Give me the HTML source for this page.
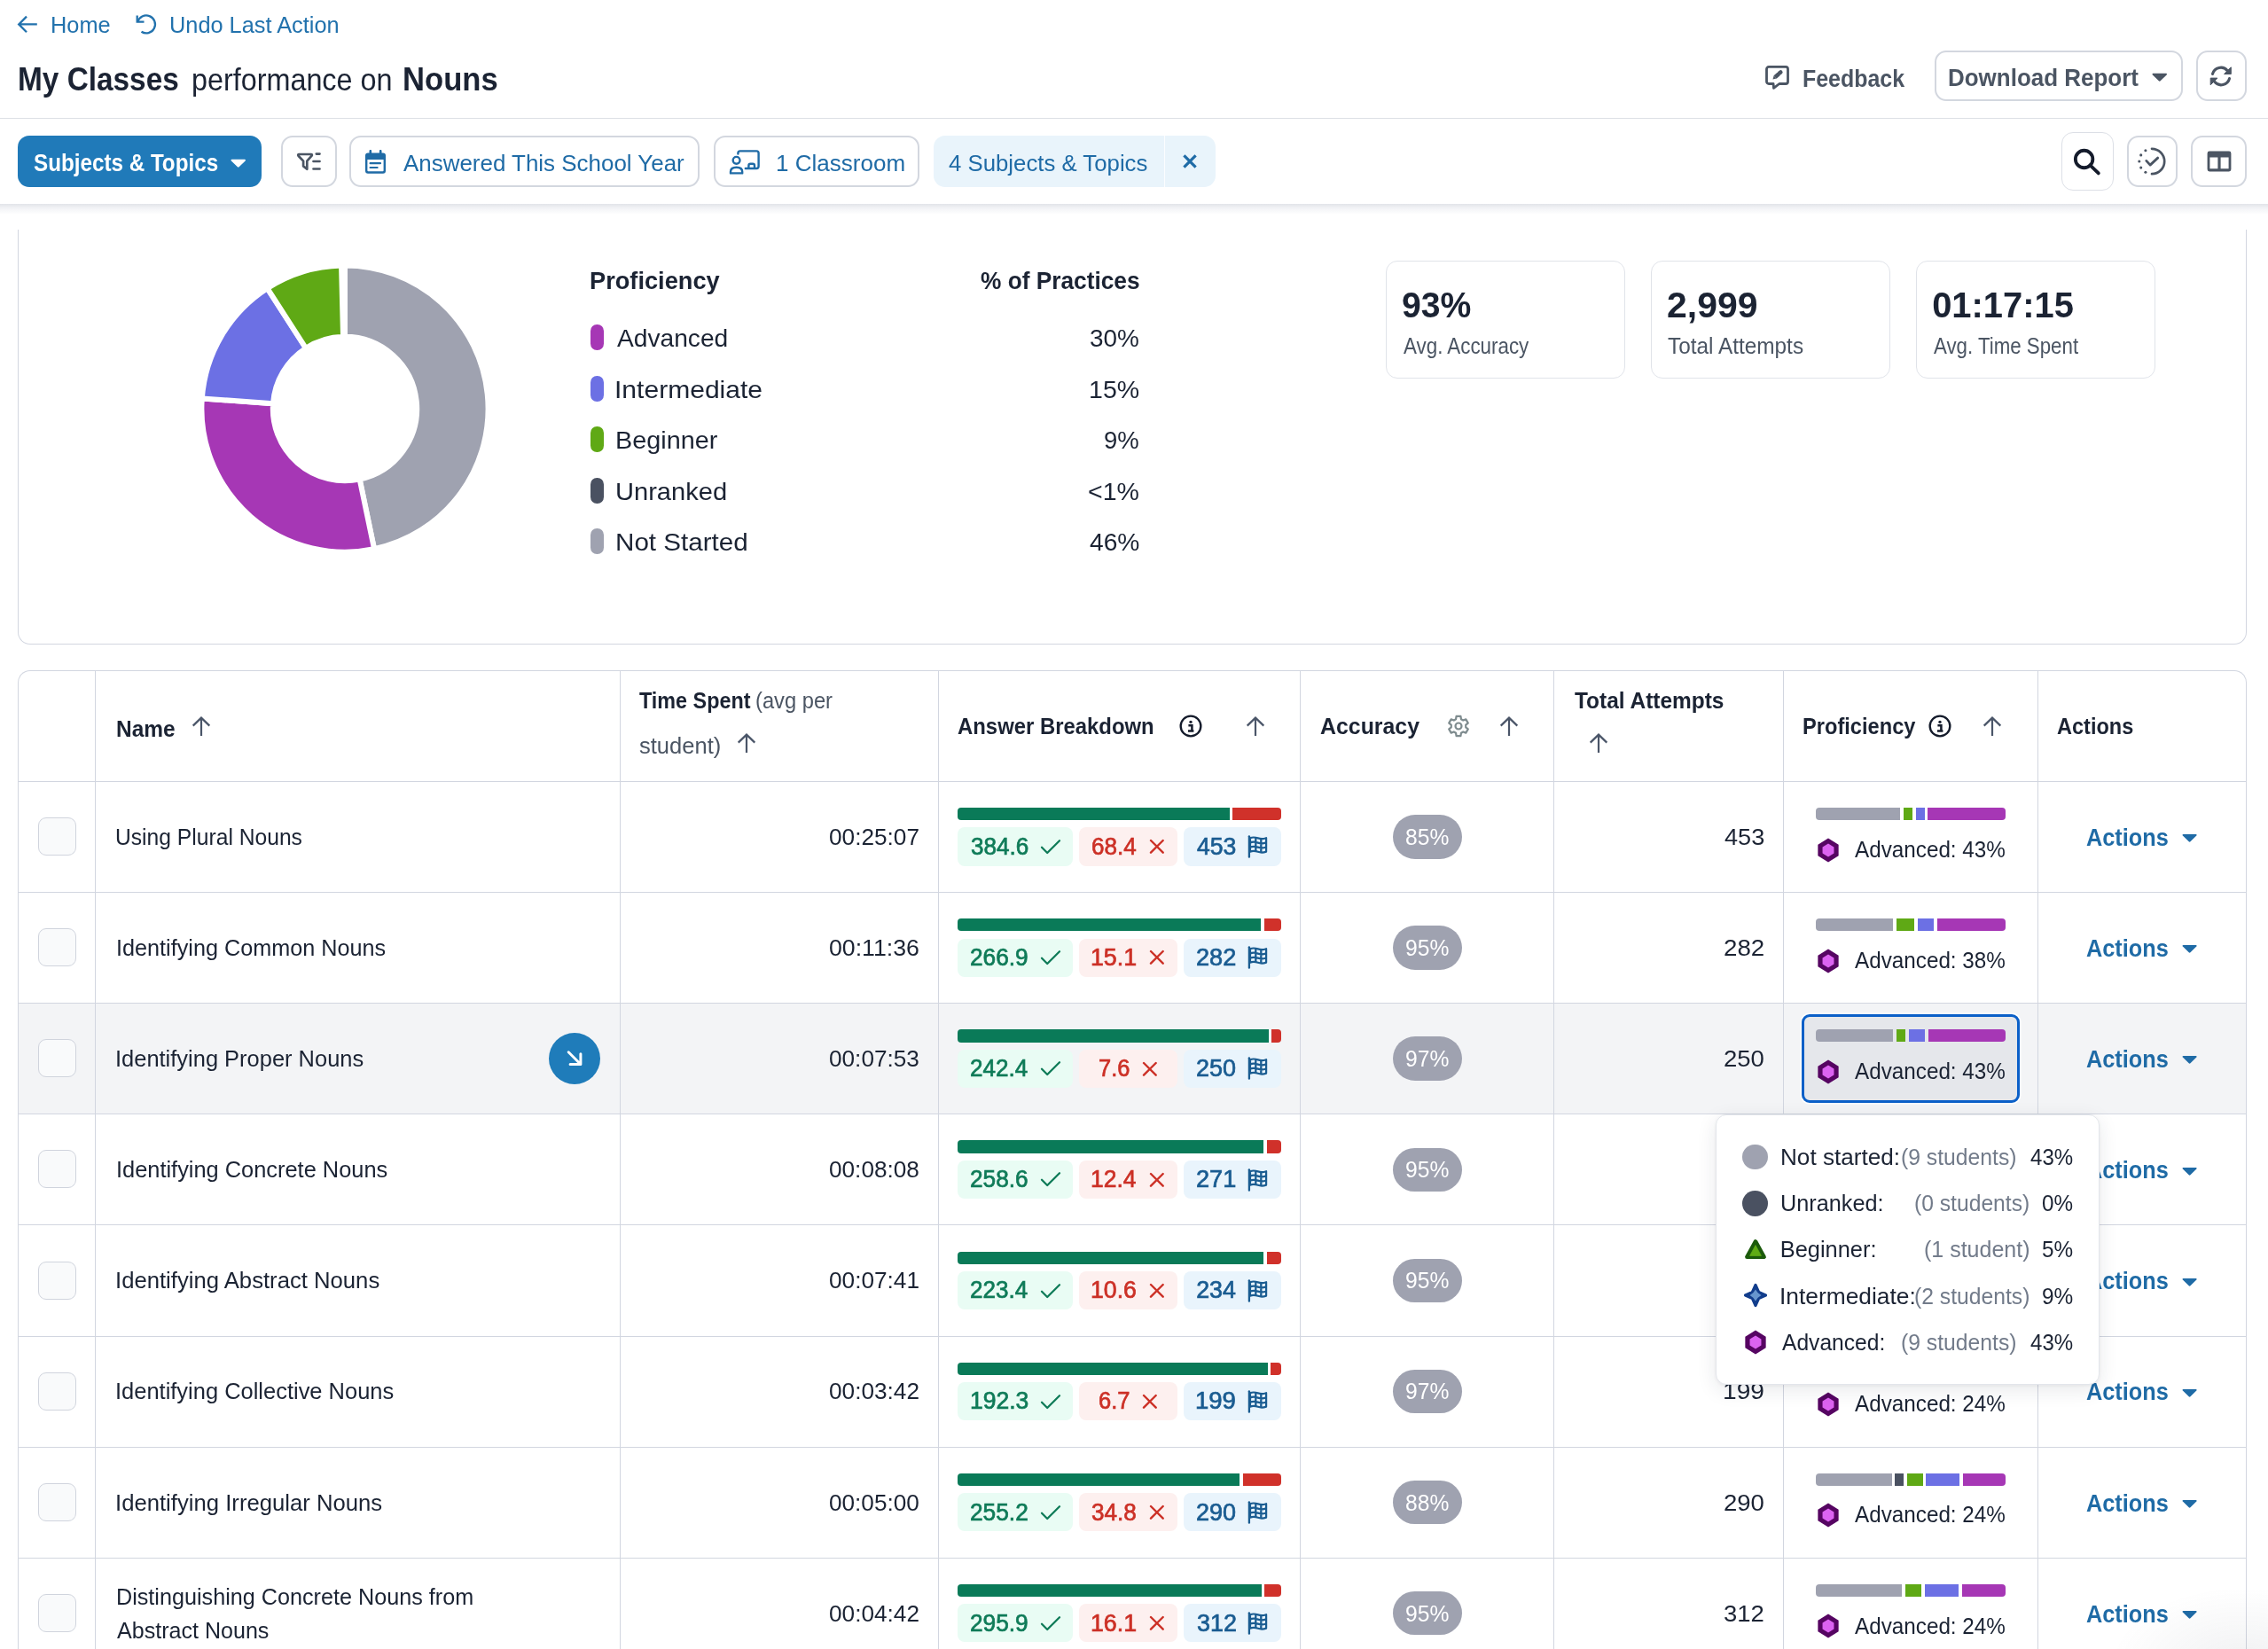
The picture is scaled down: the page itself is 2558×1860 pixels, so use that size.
<!DOCTYPE html>
<html lang="en"><head><meta charset="utf-8"><title>My Classes performance on Nouns</title>
<style>
html,body{margin:0;padding:0;background:#fff;}
body{width:2558px;height:1860px;position:relative;overflow:hidden;font-family:"Liberation Sans",sans-serif;color:#1b2333;}
.b{position:absolute;box-sizing:border-box;display:block;}
.t{position:absolute;white-space:nowrap;line-height:1;display:block;}
#w{position:absolute;left:0;top:0;width:2558px;height:1860px;overflow:hidden;will-change:transform;}
.btn{border:2px solid #d3d7df;border-radius:13px;background:#fff;}
.hl{background:#d5d9e2;}
</style></head><body><div id="w">

<svg class="b" style="left:19.0px;top:16.0px;" width="25.0" height="24.0" viewBox="0 0 25 24"><path d="M22.800 11.400H2.800M11 2.600L2.200 11.400l8.800 8.800" fill="none" stroke="#2272ad" stroke-width="2.300" stroke-linecap="butt" stroke-linejoin="miter"/></svg>
<span class="t " style="left:57.0px;top:15.9px;font-size:25px;color:#2272ad;transform:scaleX(1.0138);transform-origin:0 50%;">Home</span>
<svg class="b" style="left:153.0px;top:15.0px;" width="25.0" height="25.0" viewBox="0 0 25 25"><path d="M1.700 2.400v7.300h7.800" fill="none" stroke="#2272ad" stroke-width="2.300" stroke-linecap="butt" stroke-linejoin="miter"/><path d="M2.300 9.850A10 10 0 1 1 6.500 20.800" fill="none" stroke="#2272ad" stroke-width="2.300" stroke-linecap="butt"/></svg>
<span class="t " style="left:191.0px;top:15.9px;font-size:25px;color:#2272ad;transform:scaleX(1.0135);transform-origin:0 50%;">Undo Last Action</span>
<span class="t " style="left:19.8px;top:72.4px;font-size:36.3px;color:#1b2333;font-weight:700;transform:scaleX(0.9194);transform-origin:0 50%;">My Classes</span>
<span class="t " style="left:215.5px;top:73.0px;font-size:35.6px;color:#1b2333;transform:scaleX(0.9088);transform-origin:0 50%;">performance on</span>
<span class="t " style="left:453.8px;top:72.4px;font-size:36.3px;color:#1b2333;font-weight:700;transform:scaleX(0.9534);transform-origin:0 50%;">Nouns</span>
<svg class="b" style="left:1990.0px;top:72.0px;" width="30.0" height="30.0" viewBox="0 0 30 30"><path d="M5 3.400H24a2.500 2.500 0 0 1 2.500 2.500V20a2.500 2.500 0 0 1-2.500 2.500H16.800L10.500 27.300L10.100 22.500H5A2.500 2.500 0 0 1 2.500 20V5.900A2.500 2.500 0 0 1 5 3.400z" fill="none" stroke="#4b5563" stroke-width="2.800" stroke-linejoin="round"/><path d="M12.100 14.900L16.100 11.400" stroke="#4b5563" stroke-width="4.600" stroke-linecap="butt"/><path d="M17 10.600L18.300 9.500" stroke="#4b5563" stroke-width="4.600" stroke-linecap="round"/><path d="M9.500 17.500L10.650 13.240L13.550 16.560z" fill="#4b5563"/></svg>
<span class="t " style="left:2032.5px;top:74.9px;font-size:28px;color:#4b5563;font-weight:700;transform:scaleX(0.8909);transform-origin:0 50%;">Feedback</span>
<div class="b btn" style="left:2181.5px;top:57.0px;width:280.0px;height:56.5px;"></div>
<span class="t " style="left:2197.3px;top:73.1px;font-size:28.5px;color:#4b5563;font-weight:700;transform:scaleX(0.9111);transform-origin:0 50%;">Download Report</span>
<svg class="b" style="left:2426.8px;top:82.0px;" width="17.5" height="10.0" viewBox="0 0 18 10"><path d="M1.6 0.6h14.8c1 0 1.4 1.1 0.7 1.8l-7.2 7c-0.5 0.5-1.3 0.5-1.8 0l-7.2-7C0.2 1.7 0.6 0.6 1.6 0.6z" fill="#4b5563"/></svg>
<div class="b btn" style="left:2476.5px;top:57.0px;width:57.5px;height:56.5px;"></div>
<svg class="b" style="left:2489.9px;top:70.7px;" width="30.0" height="30.0" viewBox="-15 -15 30 30"><path d="M-9.500-2.600A9.600 9.600 0 0 1 7.200-6.300M9.500 2.600A9.600 9.600 0 0 1-7.200 6.300" fill="none" stroke="#4b5563" stroke-width="3.100" stroke-linecap="round"/><path d="M11.300-10.200V-2.500H3.600zM-11.800 9.800V2.100H-4.100z" fill="#4b5563" stroke="#4b5563" stroke-width="1" stroke-linejoin="round"/></svg>
<div class="b" style="left:0.0px;top:133.0px;width:2558.0px;height:1.0px;background:#dde0e6;"></div>
<div class="b" style="left:0.0px;top:230.0px;width:2558.0px;height:12.0px;background:linear-gradient(#e2e4e9,#f2f3f6 40%,#ffffff);"></div>
<div class="b" style="left:20.0px;top:153.0px;width:275.0px;height:58.0px;background:#207ab9;border-radius:13px;"></div>
<span class="t " style="left:37.9px;top:169.7px;font-size:27.6px;color:#ffffff;font-weight:700;transform:scaleX(0.8776);transform-origin:0 50%;">Subjects &amp; Topics</span>
<svg class="b" style="left:260.0px;top:179.4px;" width="17.5" height="10.0" viewBox="0 0 18 10"><path d="M1.6 0.6h14.8c1 0 1.4 1.1 0.7 1.8l-7.2 7c-0.5 0.5-1.3 0.5-1.8 0l-7.2-7C0.2 1.7 0.6 0.6 1.6 0.6z" fill="#ffffff"/></svg>
<div class="b btn" style="left:317.3px;top:153.2px;width:62.5px;height:57.6px;"></div>
<svg class="b" style="left:334.0px;top:169.9px;" width="30.0" height="24.0" viewBox="0 0 30 24"><path d="M3.200 4h13.700c.900 0 1.300 1 .700 1.700L12.300 11.600V20.800L8.100 17.400V11.600L2.500 5.700C1.900 5 2.300 4 3.200 4z" fill="none" stroke="#4b5563" stroke-width="2.700" stroke-linejoin="round"/><path d="M22.800 3.600h3.700M19.500 12h7M19.500 20.500h7" stroke="#4b5563" stroke-width="2.700" stroke-linecap="round"/></svg>
<div class="b btn" style="left:394.3px;top:153.2px;width:395.2px;height:57.6px;"></div>
<svg class="b" style="left:411.0px;top:168.5px;" width="25.0" height="28.0" viewBox="0 0 25 28"><path d="M6.8 1.2v4M18.2 1.2v4" stroke="#1f6ba6" stroke-width="2.6" stroke-linecap="round"/><path d="M4 3.6h17a3 3 0 0 1 3 3v17.2a3 3 0 0 1-3 3H4a3 3 0 0 1-3-3V6.600a3 3 0 0 1 3-3zM3.4 11v12.200a1 1 0 0 0 1 1h16.200a1 1 0 0 0 1-1V11z" fill="#1f6ba6" fill-rule="evenodd"/><path d="M6.600 15.200h11.400M6.600 20h8" stroke="#1f6ba6" stroke-width="2.2" stroke-linecap="round"/></svg>
<span class="t " style="left:454.5px;top:170.6px;font-size:26.6px;color:#1f6ba6;transform:scaleX(0.9754);transform-origin:0 50%;">Answered This School Year</span>
<div class="b btn" style="left:804.6px;top:153.2px;width:232.6px;height:57.6px;"></div>
<svg class="b" style="left:821.5px;top:168.5px;" width="36.0" height="29.0" viewBox="0 0 36 29"><circle cx="8.6" cy="11.8" r="3.9" fill="none" stroke="#1f6ba6" stroke-width="2.4"/><path d="M2 26.400v-1.600c0-3.200 2.600-5 6.600-5s6.600 1.800 6.600 5v1.600z" fill="none" stroke="#1f6ba6" stroke-width="2.4" stroke-linejoin="round"/><path d="M10.400 4.600v-.8a2.400 2.400 0 0 1 2.400-2.400h18.400a2.400 2.400 0 0 1 2.400 2.400v14.800a2.400 2.400 0 0 1-2.400 2.400H18.800" fill="none" stroke="#1f6ba6" stroke-width="2.4" stroke-linecap="round"/><path d="M22.400 20.600v-2.800a2 2 0 0 1 2-2h2.600a2 2 0 0 1 2 2v2.800" fill="none" stroke="#1f6ba6" stroke-width="2.4"/></svg>
<span class="t " style="left:874.8px;top:170.6px;font-size:26.6px;color:#1f6ba6;transform:scaleX(0.9789);transform-origin:0 50%;">1 Classroom</span>
<div class="b" style="left:1053.0px;top:153.2px;width:318.0px;height:57.6px;background:#e9f4fb;border-radius:13px;"></div>
<div class="b" style="left:1313.0px;top:153.2px;width:1.0px;height:57.6px;background:#fbfdff;"></div>
<span class="t " style="left:1070.4px;top:170.6px;font-size:26.6px;color:#1f6ba6;transform:scaleX(0.9689);transform-origin:0 50%;">4 Subjects &amp; Topics</span>
<svg class="b" style="left:1332.4px;top:171.5px;" width="20.0" height="20.0" viewBox="0 0 20 20"><path d="M3.400 3.400l13.200 13.200M16.600 3.400L3.400 16.600" stroke="#1f6ba6" stroke-width="3.200" stroke-linecap="butt"/></svg>
<div class="b" style="left:2325.0px;top:149.0px;width:59.0px;height:66.0px;border:1px solid #dcdfe6;border-radius:13px;background:#fff;"></div>
<svg class="b" style="left:2336.0px;top:165.0px;" width="34.0" height="34.0" viewBox="0 0 34 34"><circle cx="14.600" cy="14.500" r="9.750" fill="none" stroke="#141b2b" stroke-width="3.800"/><path d="M21.400 21.300l9.400 9.100" stroke="#141b2b" stroke-width="3.800" stroke-linecap="round"/></svg>
<div class="b btn" style="left:2399.0px;top:153.2px;width:56.5px;height:57.6px;"></div>
<svg class="b" style="left:2409.8px;top:164.8px;" width="34.0" height="34.0" viewBox="-17 -17 34 34"><path d="M0-14.200a14.200 14.200 0 0 1 0 28.400" fill="none" stroke="#4b5563" stroke-width="2.700" stroke-linecap="round"/><circle cx="-7.10" cy="-12.30" r="1.550" fill="#4b5563"/><circle cx="-12.30" cy="-7.10" r="1.550" fill="#4b5563"/><circle cx="-14.20" cy="-0.00" r="1.550" fill="#4b5563"/><circle cx="-12.30" cy="7.10" r="1.550" fill="#4b5563"/><circle cx="-7.10" cy="12.30" r="1.550" fill="#4b5563"/><path d="M-6.200-.600l4.300 4.700 8.600-8" fill="none" stroke="#4b5563" stroke-width="2.800" stroke-linecap="round" stroke-linejoin="round"/></svg>
<div class="b btn" style="left:2471.0px;top:153.2px;width:62.7px;height:57.6px;"></div>
<svg class="b" style="left:2488.5px;top:170.0px;" width="28.0" height="24.0" viewBox="0 0 28 24"><path d="M3 0.600h22a2.400 2.400 0 0 1 2.400 2.400v18a2.400 2.400 0 0 1-2.400 2.400H3a2.400 2.400 0 0 1-2.400-2.400V3A2.400 2.400 0 0 1 3 .600zM3.400 7.400v12.800h9V7.400zM15.600 7.400v12.800h9V7.400z" fill="#4b5563" fill-rule="evenodd"/></svg>
<div class="b" style="left:20.0px;top:259.0px;width:2514.0px;height:468.0px;border:1px solid #d2d6e0;border-top:none;border-radius:0 0 14px 14px;"></div>
<svg class="b" style="left:0;top:0" width="700" height="740" viewBox="0 0 700 740"><path d="M389.00 299.40A161.6 161.6 0 0 1 422.05 619.18L405.61 540.48A81.2 81.2 0 0 0 389.00 379.80Z" fill="#9fa2b0" stroke="#ffffff" stroke-width="6" stroke-linejoin="miter"/><path d="M422.05 619.18A161.6 161.6 0 0 1 227.81 449.45L308.01 455.19A81.2 81.2 0 0 0 405.61 540.48Z" fill="#a637b5" stroke="#ffffff" stroke-width="6" stroke-linejoin="miter"/><path d="M227.81 449.45A161.6 161.6 0 0 1 301.46 325.16L345.01 392.75A81.2 81.2 0 0 0 308.01 455.19Z" fill="#6c70e4" stroke="#ffffff" stroke-width="6" stroke-linejoin="miter"/><path d="M301.46 325.16A161.6 161.6 0 0 1 385.05 299.45L387.02 379.82A81.2 81.2 0 0 0 345.01 392.75Z" fill="#5fa915" stroke="#ffffff" stroke-width="6" stroke-linejoin="miter"/></svg>
<span class="t " style="left:665.2px;top:302.3px;font-size:28.5px;color:#1b2333;font-weight:700;transform:scaleX(0.9544);transform-origin:0 50%;">Proficiency</span>
<span class="t " style="left:1105.5px;top:302.3px;font-size:28.5px;color:#1b2333;font-weight:700;transform:scaleX(0.9215);transform-origin:0 50%;">% of Practices</span>
<div class="b" style="left:666.2px;top:366.0px;width:14.5px;height:29.0px;background:#a637b5;border-radius:7.250px;"></div>
<span class="t " style="left:696.1px;top:367.2px;font-size:28.5px;color:#1b2333;transform:scaleX(0.9880);transform-origin:0 50%;">Advanced</span>
<span class="t " style="left:1229.2px;top:367.2px;font-size:28.5px;color:#1b2333;transform:scaleX(0.9781);transform-origin:0 50%;">30%</span>
<div class="b" style="left:666.2px;top:423.5px;width:14.5px;height:29.0px;background:#6c70e4;border-radius:7.250px;"></div>
<span class="t " style="left:693.4px;top:424.7px;font-size:28.5px;color:#1b2333;transform:scaleX(1.0547);transform-origin:0 50%;">Intermediate</span>
<span class="t " style="left:1228.1px;top:424.7px;font-size:28.5px;color:#1b2333;">15%</span>
<div class="b" style="left:666.2px;top:481.0px;width:14.5px;height:29.0px;background:#5fa915;border-radius:7.250px;"></div>
<span class="t " style="left:693.9px;top:482.2px;font-size:28.5px;color:#1b2333;transform:scaleX(1.0111);transform-origin:0 50%;">Beginner</span>
<span class="t " style="left:1245.3px;top:482.2px;font-size:28.5px;color:#1b2333;transform:scaleX(0.9639);transform-origin:0 50%;">9%</span>
<div class="b" style="left:666.2px;top:538.5px;width:14.5px;height:29.0px;background:#4a5161;border-radius:7.250px;"></div>
<span class="t " style="left:693.9px;top:539.7px;font-size:28.5px;color:#1b2333;transform:scaleX(1.0204);transform-origin:0 50%;">Unranked</span>
<span class="t " style="left:1227.0px;top:539.7px;font-size:28.5px;color:#1b2333;">&lt;1%</span>
<div class="b" style="left:666.2px;top:596.0px;width:14.5px;height:29.0px;background:#9fa2b0;border-radius:7.250px;"></div>
<span class="t " style="left:693.8px;top:597.2px;font-size:28.5px;color:#1b2333;transform:scaleX(1.0387);transform-origin:0 50%;">Not Started</span>
<span class="t " style="left:1228.6px;top:597.2px;font-size:28.5px;color:#1b2333;transform:scaleX(0.9886);transform-origin:0 50%;">46%</span>
<div class="b" style="left:1563.4px;top:294.0px;width:270.0px;height:132.5px;border:1px solid #e0e3e9;border-radius:13px;background:#fff;"></div>
<span class="t " style="left:1581.4px;top:324.5px;font-size:39.9px;color:#1b2333;font-weight:700;transform:scaleX(0.9818);transform-origin:0 50%;">93%</span>
<span class="t " style="left:1582.7px;top:376.7px;font-size:26.6px;color:#4b5563;transform:scaleX(0.8409);transform-origin:0 50%;">Avg. Accuracy</span>
<div class="b" style="left:1862.0px;top:294.0px;width:270.0px;height:132.5px;border:1px solid #e0e3e9;border-radius:13px;background:#fff;"></div>
<span class="t " style="left:1880.0px;top:324.5px;font-size:39.9px;color:#1b2333;font-weight:700;transform:scaleX(1.0262);transform-origin:0 50%;">2,999</span>
<span class="t " style="left:1880.9px;top:376.7px;font-size:26.6px;color:#4b5563;transform:scaleX(0.9165);transform-origin:0 50%;">Total Attempts</span>
<div class="b" style="left:2161.3px;top:294.0px;width:270.0px;height:132.5px;border:1px solid #e0e3e9;border-radius:13px;background:#fff;"></div>
<span class="t " style="left:2179.2px;top:324.5px;font-size:39.9px;color:#1b2333;font-weight:700;">01:17:15</span>
<span class="t " style="left:2180.6px;top:376.7px;font-size:26.6px;color:#4b5563;transform:scaleX(0.8380);transform-origin:0 50%;">Avg. Time Spent</span>
<div class="b" style="left:20.0px;top:1131.6px;width:2514.0px;height:125.1px;background:#f3f4f6;"></div>
<div class="b" style="left:20.0px;top:756.0px;width:2514.0px;height:1200.0px;border:1px solid #d2d6e0;border-radius:14px 14px 0 0;border-bottom:none;"></div>
<div class="b" style="left:107.0px;top:756.0px;width:1.0px;height:1110.0px;background:#d2d6e0;"></div>
<div class="b" style="left:699.0px;top:756.0px;width:1.0px;height:1110.0px;background:#d2d6e0;"></div>
<div class="b" style="left:1058.0px;top:756.0px;width:1.0px;height:1110.0px;background:#d2d6e0;"></div>
<div class="b" style="left:1466.0px;top:756.0px;width:1.0px;height:1110.0px;background:#d2d6e0;"></div>
<div class="b" style="left:1752.0px;top:756.0px;width:1.0px;height:1110.0px;background:#d2d6e0;"></div>
<div class="b" style="left:2011.0px;top:756.0px;width:1.0px;height:1110.0px;background:#d2d6e0;"></div>
<div class="b" style="left:2298.0px;top:756.0px;width:1.0px;height:1110.0px;background:#d2d6e0;"></div>
<div class="b" style="left:20.0px;top:881.0px;width:2514.0px;height:1.0px;background:#d2d6e0;"></div>
<div class="b" style="left:20.0px;top:1006.0px;width:2514.0px;height:1.0px;background:#d2d6e0;"></div>
<div class="b" style="left:20.0px;top:1131.0px;width:2514.0px;height:1.0px;background:#d2d6e0;"></div>
<div class="b" style="left:20.0px;top:1256.0px;width:2514.0px;height:1.0px;background:#d2d6e0;"></div>
<div class="b" style="left:20.0px;top:1381.0px;width:2514.0px;height:1.0px;background:#d2d6e0;"></div>
<div class="b" style="left:20.0px;top:1507.0px;width:2514.0px;height:1.0px;background:#d2d6e0;"></div>
<div class="b" style="left:20.0px;top:1632.0px;width:2514.0px;height:1.0px;background:#d2d6e0;"></div>
<div class="b" style="left:20.0px;top:1757.0px;width:2514.0px;height:1.0px;background:#d2d6e0;"></div>
<span class="t " style="left:131.2px;top:809.9px;font-size:25.3px;color:#1b2333;font-weight:700;transform:scaleX(0.9682);transform-origin:0 50%;">Name</span>
<svg class="b" style="left:215.5px;top:806.7px;" width="22.0" height="24.0" viewBox="0 0 22 24"><path d="M11 23V3.200M1.700 11.600L11 2.600l9.300 9" fill="none" stroke="#4a5568" stroke-width="2.200" stroke-linecap="butt" stroke-linejoin="miter"/></svg>
<span class="t " style="left:720.8px;top:777.9px;font-size:25.3px;color:#1b2333;font-weight:700;transform:scaleX(0.9238);transform-origin:0 50%;">Time Spent</span>
<span class="t " style="left:851.9px;top:777.9px;font-size:25.3px;color:#4b5563;transform:scaleX(0.9374);transform-origin:0 50%;">(avg per</span>
<span class="t " style="left:720.5px;top:829.2px;font-size:25.3px;color:#4b5563;transform:scaleX(1.0092);transform-origin:0 50%;">student)</span>
<svg class="b" style="left:830.5px;top:825.7px;" width="22.0" height="24.0" viewBox="0 0 22 24"><path d="M11 23V3.200M1.700 11.600L11 2.600l9.300 9" fill="none" stroke="#4a5568" stroke-width="2.200" stroke-linecap="butt" stroke-linejoin="miter"/></svg>
<span class="t " style="left:1080.1px;top:807.0px;font-size:25.3px;color:#1b2333;font-weight:700;transform:scaleX(0.9444);transform-origin:0 50%;">Answer Breakdown</span>
<svg class="b" style="left:1328.6px;top:804.5px;" width="28.0" height="28.0" viewBox="-14 -14 28 28"><circle cx="0" cy="0" r="11.350" fill="none" stroke="#141b2b" stroke-width="2.350"/><circle cx="0" cy="-4.700" r="1.650" fill="#141b2b"/><path d="M-2.600-.700H1.400V5.500M-3 5.600H3.400" fill="none" stroke="#141b2b" stroke-width="2.500" stroke-linecap="butt" stroke-linejoin="miter"/></svg>
<svg class="b" style="left:1405.4px;top:806.8px;" width="22.0" height="24.0" viewBox="0 0 22 24"><path d="M11 23V3.200M1.700 11.600L11 2.600l9.300 9" fill="none" stroke="#4a5568" stroke-width="2.200" stroke-linecap="butt" stroke-linejoin="miter"/></svg>
<span class="t " style="left:1488.9px;top:807.0px;font-size:25.3px;color:#1b2333;font-weight:700;transform:scaleX(0.9836);transform-origin:0 50%;">Accuracy</span>
<svg class="b" style="left:1630.5px;top:804.5px;" width="28.0" height="28.0" viewBox="-14 -14 28 28"><g fill="none" stroke="#7f8c8f" stroke-width="2.200" stroke-linejoin="round"><circle cx="0" cy="0" r="3.500"/><path d="M-2.97 -7.75L-2.45 -11.03L2.45 -11.03L2.97 -7.75L5.22 -6.45L8.33 -7.63L10.78 -3.40L8.20 -1.30L8.20 1.30L10.78 3.40L8.33 7.63L5.22 6.45L2.97 7.75L2.45 11.03L-2.45 11.03L-2.97 7.75L-5.22 6.45L-8.33 7.63L-10.78 3.40L-8.20 1.30L-8.20 -1.30L-10.78 -3.40L-8.33 -7.63L-5.22 -6.45z"/></g></svg>
<svg class="b" style="left:1691.2px;top:806.8px;" width="22.0" height="24.0" viewBox="0 0 22 24"><path d="M11 23V3.200M1.700 11.600L11 2.600l9.300 9" fill="none" stroke="#4a5568" stroke-width="2.200" stroke-linecap="butt" stroke-linejoin="miter"/></svg>
<span class="t " style="left:1775.5px;top:777.9px;font-size:25.3px;color:#1b2333;font-weight:700;transform:scaleX(0.9665);transform-origin:0 50%;">Total Attempts</span>
<svg class="b" style="left:1792.2px;top:825.7px;" width="22.0" height="24.0" viewBox="0 0 22 24"><path d="M11 23V3.200M1.700 11.600L11 2.600l9.300 9" fill="none" stroke="#4a5568" stroke-width="2.200" stroke-linecap="butt" stroke-linejoin="miter"/></svg>
<span class="t " style="left:2033.2px;top:807.0px;font-size:25.3px;color:#1b2333;font-weight:700;transform:scaleX(0.9346);transform-origin:0 50%;">Proficiency</span>
<svg class="b" style="left:2174.3px;top:804.5px;" width="28.0" height="28.0" viewBox="-14 -14 28 28"><circle cx="0" cy="0" r="11.350" fill="none" stroke="#141b2b" stroke-width="2.350"/><circle cx="0" cy="-4.700" r="1.650" fill="#141b2b"/><path d="M-2.600-.700H1.400V5.500M-3 5.600H3.400" fill="none" stroke="#141b2b" stroke-width="2.500" stroke-linecap="butt" stroke-linejoin="miter"/></svg>
<svg class="b" style="left:2236.1px;top:806.8px;" width="22.0" height="24.0" viewBox="0 0 22 24"><path d="M11 23V3.200M1.700 11.600L11 2.600l9.300 9" fill="none" stroke="#4a5568" stroke-width="2.200" stroke-linecap="butt" stroke-linejoin="miter"/></svg>
<span class="t " style="left:2320.1px;top:807.0px;font-size:25.3px;color:#1b2333;font-weight:700;transform:scaleX(0.9300);transform-origin:0 50%;">Actions</span>
<div class="b" style="left:43.0px;top:922.0px;width:43.0px;height:43.0px;border:1px solid #d0d4dd;border-radius:9px;background:#f9fafb;"></div>
<span class="t " style="left:130.3px;top:931.8px;font-size:25.8px;color:#1b2333;transform:scaleX(0.9553);transform-origin:0 50%;">Using Plural Nouns</span>
<span class="t " style="left:934.9px;top:931.8px;font-size:25.8px;color:#1b2333;transform:scaleX(1.0159);transform-origin:0 50%;">00:25:07</span>
<div class="b" style="left:1080.2px;top:911.0px;width:307.0px;height:14.4px;background:#0a7a58;border-radius:4px 0 0 4px;"></div>
<div class="b" style="left:1390.4px;top:911.0px;width:54.6px;height:14.4px;background:#d0312a;border-radius:0 4px 4px 0;"></div>
<div class="b" style="left:1080.0px;top:933.4px;width:130.0px;height:43.2px;background:#e9fcf4;border-radius:8px;"></div>
<span class="t " style="left:1094.7px;top:941.8px;font-size:26.8px;color:#0f7b58;-webkit-text-stroke:0.7px #0f7b58;transform:scaleX(0.9735);transform-origin:0 50%;">384.6</span>
<svg class="b" style="left:1172.5px;top:946.0px;" width="24.0" height="18.0" viewBox="0 0 24 18"><path d="M2 9.800l6.200 6.200L22 2.200" fill="none" stroke="#0f7b58" stroke-width="2.300" stroke-linecap="round" stroke-linejoin="round"/></svg>
<div class="b" style="left:1217.0px;top:933.4px;width:111.0px;height:43.2px;background:#fdf0ef;border-radius:8px;"></div>
<span class="t " style="left:1230.6px;top:941.8px;font-size:26.8px;color:#cc3026;-webkit-text-stroke:0.7px #cc3026;transform:scaleX(0.9730);transform-origin:0 50%;">68.4</span>
<svg class="b" style="left:1295.6px;top:946.3px;" width="17.7" height="17.7" viewBox="0 0 17.7 17.7"><path d="M2 2l13.700 13.700M15.700 2L2 15.700" stroke="#cc3026" stroke-width="2.400" stroke-linecap="round"/></svg>
<div class="b" style="left:1335.2px;top:933.4px;width:109.8px;height:43.2px;background:#e9f4fc;border-radius:8px;"></div>
<span class="t " style="left:1349.9px;top:941.8px;font-size:26.8px;color:#1a5c91;-webkit-text-stroke:0.7px #1a5c91;transform:scaleX(0.9919);transform-origin:0 50%;">453</span>
<svg class="b" style="left:1407.1px;top:942.2px;" width="24.0" height="26.0" viewBox="0 0 24 26"><path d="M1.900 1.300v23.400" stroke="#1a5c91" stroke-width="2.300" stroke-linecap="round"/><path d="M3 3.200c3.200-1.200 5.600-.900 8.800.200s5.800 1.100 9.300-.200v15.400c-3.500 1.300-6.100 1.300-9.300.200s-5.600-1.400-8.800-.200z" fill="none" stroke="#1a5c91" stroke-width="2.200" stroke-linejoin="round"/><path d="M3 8.400c3.200-1.200 5.600-.900 8.800.200s5.800 1.100 9.300-.200M3 13.500c3.200-1.200 5.600-.900 8.800.200s5.800 1.100 9.300-.200M9.300 2.400v15.600M15.300 3.900v15.600" fill="none" stroke="#1a5c91" stroke-width="2.300"/></svg>
<div class="b" style="left:1571.2px;top:919.1px;width:77.5px;height:49.6px;background:#9fa2b0;border-radius:25px;"></div>
<span class="t " style="left:1585.0px;top:931.8px;font-size:25.8px;color:#ffffff;transform:scaleX(0.9544);transform-origin:0 50%;">85%</span>
<span class="t " style="left:1944.7px;top:931.8px;font-size:25.8px;color:#1b2333;transform:scaleX(1.0521);transform-origin:0 50%;">453</span>
<div class="b" style="left:2047.9px;top:911.0px;width:95.2px;height:14.2px;background:#9fa2b0;border-radius:4px 0 0 4px;"></div>
<div class="b" style="left:2147.0px;top:911.0px;width:10.1px;height:14.2px;background:#5fa915;"></div>
<div class="b" style="left:2161.1px;top:911.0px;width:9.7px;height:14.2px;background:#6c70e4;"></div>
<div class="b" style="left:2174.1px;top:911.0px;width:88.0px;height:14.2px;background:#a637b5;border-radius:0 4px 4px 0;"></div>
<svg class="b" style="left:2049.4px;top:943.6px;" width="26.0" height="30.0" viewBox="-13 -15 26 30"><path d="M0-13.500L11.650-6.300V6.300L0 13.500L-11.650 6.300V-6.300z" fill="#560562"/><path d="M0-7.400L6.450-3.600V3.600L0 7.400L-6.450 3.600V-3.600z" fill="#dc63f1"/></svg>
<span class="t " style="left:2091.8px;top:945.7px;font-size:25.8px;color:#1b2333;transform:scaleX(0.9401);transform-origin:0 50%;">Advanced: 43%</span>
<span class="t " style="left:2353.4px;top:931.8px;font-size:27px;color:#1f6ba6;font-weight:700;transform:scaleX(0.9372);transform-origin:0 50%;">Actions</span>
<svg class="b" style="left:2460.8px;top:940.1px;" width="17.2" height="10.2" viewBox="0 0 18 10"><path d="M1.6 0.6h14.8c1 0 1.4 1.1 0.7 1.8l-7.2 7c-0.5 0.5-1.3 0.5-1.8 0l-7.2-7C0.2 1.7 0.6 0.6 1.6 0.6z" fill="#1f6ba6"/></svg>
<div class="b" style="left:43.0px;top:1047.1px;width:43.0px;height:43.0px;border:1px solid #d0d4dd;border-radius:9px;background:#f9fafb;"></div>
<span class="t " style="left:130.5px;top:1056.9px;font-size:25.8px;color:#1b2333;transform:scaleX(0.9775);transform-origin:0 50%;">Identifying Common Nouns</span>
<span class="t " style="left:934.9px;top:1056.9px;font-size:25.8px;color:#1b2333;transform:scaleX(1.0350);transform-origin:0 50%;">00:11:36</span>
<div class="b" style="left:1080.2px;top:1036.1px;width:342.2px;height:14.4px;background:#0a7a58;border-radius:4px 0 0 4px;"></div>
<div class="b" style="left:1425.6px;top:1036.1px;width:19.4px;height:14.4px;background:#d0312a;border-radius:0 4px 4px 0;"></div>
<div class="b" style="left:1080.0px;top:1058.5px;width:130.0px;height:43.2px;background:#e9fcf4;border-radius:8px;"></div>
<span class="t " style="left:1094.3px;top:1066.9px;font-size:26.8px;color:#0f7b58;-webkit-text-stroke:0.7px #0f7b58;transform:scaleX(0.9795);transform-origin:0 50%;">266.9</span>
<svg class="b" style="left:1172.5px;top:1071.1px;" width="24.0" height="18.0" viewBox="0 0 24 18"><path d="M2 9.800l6.200 6.200L22 2.200" fill="none" stroke="#0f7b58" stroke-width="2.300" stroke-linecap="round" stroke-linejoin="round"/></svg>
<div class="b" style="left:1217.0px;top:1058.5px;width:111.0px;height:43.2px;background:#fdf0ef;border-radius:8px;"></div>
<span class="t " style="left:1229.9px;top:1066.9px;font-size:26.8px;color:#cc3026;-webkit-text-stroke:0.7px #cc3026;">15.1</span>
<svg class="b" style="left:1295.6px;top:1071.4px;" width="17.7" height="17.7" viewBox="0 0 17.7 17.7"><path d="M2 2l13.700 13.700M15.700 2L2 15.700" stroke="#cc3026" stroke-width="2.400" stroke-linecap="round"/></svg>
<div class="b" style="left:1335.2px;top:1058.5px;width:109.8px;height:43.2px;background:#e9f4fc;border-radius:8px;"></div>
<span class="t " style="left:1349.1px;top:1066.9px;font-size:26.8px;color:#1a5c91;-webkit-text-stroke:0.7px #1a5c91;transform:scaleX(1.0125);transform-origin:0 50%;">282</span>
<svg class="b" style="left:1407.1px;top:1067.3px;" width="24.0" height="26.0" viewBox="0 0 24 26"><path d="M1.900 1.300v23.400" stroke="#1a5c91" stroke-width="2.300" stroke-linecap="round"/><path d="M3 3.200c3.200-1.200 5.600-.900 8.800.200s5.800 1.100 9.300-.200v15.400c-3.500 1.300-6.100 1.300-9.300.200s-5.600-1.400-8.800-.200z" fill="none" stroke="#1a5c91" stroke-width="2.200" stroke-linejoin="round"/><path d="M3 8.400c3.200-1.200 5.600-.900 8.800.200s5.800 1.100 9.300-.200M3 13.500c3.200-1.200 5.600-.900 8.800.200s5.800 1.100 9.300-.200M9.300 2.400v15.600M15.300 3.900v15.600" fill="none" stroke="#1a5c91" stroke-width="2.300"/></svg>
<div class="b" style="left:1571.2px;top:1044.2px;width:77.5px;height:49.6px;background:#9fa2b0;border-radius:25px;"></div>
<span class="t " style="left:1584.9px;top:1056.9px;font-size:25.8px;color:#ffffff;transform:scaleX(0.9556);transform-origin:0 50%;">95%</span>
<span class="t " style="left:1943.9px;top:1056.9px;font-size:25.8px;color:#1b2333;transform:scaleX(1.0739);transform-origin:0 50%;">282</span>
<div class="b" style="left:2047.9px;top:1036.1px;width:86.9px;height:14.2px;background:#9fa2b0;border-radius:4px 0 0 4px;"></div>
<div class="b" style="left:2138.8px;top:1036.1px;width:20.1px;height:14.2px;background:#5fa915;"></div>
<div class="b" style="left:2162.9px;top:1036.1px;width:18.0px;height:14.2px;background:#6c70e4;"></div>
<div class="b" style="left:2184.9px;top:1036.1px;width:77.2px;height:14.2px;background:#a637b5;border-radius:0 4px 4px 0;"></div>
<svg class="b" style="left:2049.4px;top:1068.7px;" width="26.0" height="30.0" viewBox="-13 -15 26 30"><path d="M0-13.500L11.650-6.300V6.300L0 13.500L-11.650 6.300V-6.300z" fill="#560562"/><path d="M0-7.400L6.450-3.600V3.600L0 7.400L-6.450 3.600V-3.600z" fill="#dc63f1"/></svg>
<span class="t " style="left:2091.8px;top:1070.8px;font-size:25.8px;color:#1b2333;transform:scaleX(0.9401);transform-origin:0 50%;">Advanced: 38%</span>
<span class="t " style="left:2353.4px;top:1057.0px;font-size:27px;color:#1f6ba6;font-weight:700;transform:scaleX(0.9372);transform-origin:0 50%;">Actions</span>
<svg class="b" style="left:2460.8px;top:1065.2px;" width="17.2" height="10.2" viewBox="0 0 18 10"><path d="M1.6 0.6h14.8c1 0 1.4 1.1 0.7 1.8l-7.2 7c-0.5 0.5-1.3 0.5-1.8 0l-7.2-7C0.2 1.7 0.6 0.6 1.6 0.6z" fill="#1f6ba6"/></svg>
<div class="b" style="left:43.0px;top:1172.2px;width:43.0px;height:43.0px;border:1px solid #d0d4dd;border-radius:9px;background:#f9fafb;"></div>
<span class="t " style="left:130.4px;top:1182.0px;font-size:25.8px;color:#1b2333;transform:scaleX(0.9868);transform-origin:0 50%;">Identifying Proper Nouns</span>
<span class="t " style="left:934.9px;top:1182.0px;font-size:25.8px;color:#1b2333;transform:scaleX(1.0146);transform-origin:0 50%;">00:07:53</span>
<div class="b" style="left:1080.2px;top:1161.2px;width:350.6px;height:14.4px;background:#0a7a58;border-radius:4px 0 0 4px;"></div>
<div class="b" style="left:1434.0px;top:1161.2px;width:11.0px;height:14.4px;background:#d0312a;border-radius:0 4px 4px 0;"></div>
<div class="b" style="left:1080.0px;top:1183.6px;width:130.0px;height:43.2px;background:#e9fcf4;border-radius:8px;"></div>
<span class="t " style="left:1094.3px;top:1192.1px;font-size:26.8px;color:#0f7b58;-webkit-text-stroke:0.7px #0f7b58;transform:scaleX(0.9725);transform-origin:0 50%;">242.4</span>
<svg class="b" style="left:1172.5px;top:1196.2px;" width="24.0" height="18.0" viewBox="0 0 24 18"><path d="M2 9.800l6.200 6.200L22 2.200" fill="none" stroke="#0f7b58" stroke-width="2.300" stroke-linecap="round" stroke-linejoin="round"/></svg>
<div class="b" style="left:1217.0px;top:1183.6px;width:111.0px;height:43.2px;background:#fdf0ef;border-radius:8px;"></div>
<span class="t " style="left:1238.5px;top:1192.1px;font-size:26.8px;color:#cc3026;-webkit-text-stroke:0.7px #cc3026;transform:scaleX(0.9490);transform-origin:0 50%;">7.6</span>
<svg class="b" style="left:1287.8px;top:1196.5px;" width="17.7" height="17.7" viewBox="0 0 17.7 17.7"><path d="M2 2l13.700 13.700M15.700 2L2 15.700" stroke="#cc3026" stroke-width="2.400" stroke-linecap="round"/></svg>
<div class="b" style="left:1335.2px;top:1183.6px;width:109.8px;height:43.2px;background:#e9f4fc;border-radius:8px;"></div>
<span class="t " style="left:1349.2px;top:1192.1px;font-size:26.8px;color:#1a5c91;-webkit-text-stroke:0.7px #1a5c91;transform:scaleX(1.0060);transform-origin:0 50%;">250</span>
<svg class="b" style="left:1407.1px;top:1192.4px;" width="24.0" height="26.0" viewBox="0 0 24 26"><path d="M1.900 1.300v23.400" stroke="#1a5c91" stroke-width="2.300" stroke-linecap="round"/><path d="M3 3.200c3.200-1.200 5.600-.900 8.800.200s5.800 1.100 9.300-.200v15.400c-3.500 1.300-6.100 1.300-9.300.200s-5.600-1.400-8.800-.200z" fill="none" stroke="#1a5c91" stroke-width="2.200" stroke-linejoin="round"/><path d="M3 8.400c3.200-1.200 5.600-.900 8.800.200s5.800 1.100 9.300-.200M3 13.500c3.200-1.200 5.600-.900 8.800.200s5.800 1.100 9.300-.200M9.300 2.400v15.600M15.300 3.900v15.600" fill="none" stroke="#1a5c91" stroke-width="2.300"/></svg>
<div class="b" style="left:1571.2px;top:1169.3px;width:77.5px;height:49.6px;background:#9fa2b0;border-radius:25px;"></div>
<span class="t " style="left:1584.9px;top:1182.0px;font-size:25.8px;color:#ffffff;transform:scaleX(0.9556);transform-origin:0 50%;">97%</span>
<span class="t " style="left:1943.9px;top:1182.0px;font-size:25.8px;color:#1b2333;transform:scaleX(1.0671);transform-origin:0 50%;">250</span>
<div class="b" style="left:2032.2px;top:1144.0px;width:245.8px;height:100.0px;background:#e5e7eb;border:3.4px solid #0b60c8;border-radius:9px;box-shadow:0 0 0 1.6px #ffffff;"></div>
<div class="b" style="left:2047.9px;top:1161.2px;width:86.9px;height:14.2px;background:#9fa2b0;border-radius:4px 0 0 4px;"></div>
<div class="b" style="left:2138.8px;top:1161.2px;width:10.1px;height:14.2px;background:#5fa915;"></div>
<div class="b" style="left:2152.9px;top:1161.2px;width:18.0px;height:14.2px;background:#6c70e4;"></div>
<div class="b" style="left:2174.9px;top:1161.2px;width:87.2px;height:14.2px;background:#a637b5;border-radius:0 4px 4px 0;"></div>
<svg class="b" style="left:2049.4px;top:1193.8px;" width="26.0" height="30.0" viewBox="-13 -15 26 30"><path d="M0-13.500L11.650-6.300V6.300L0 13.500L-11.650 6.300V-6.300z" fill="#560562"/><path d="M0-7.400L6.450-3.600V3.600L0 7.400L-6.450 3.600V-3.600z" fill="#dc63f1"/></svg>
<span class="t " style="left:2091.8px;top:1195.9px;font-size:25.8px;color:#1b2333;transform:scaleX(0.9401);transform-origin:0 50%;">Advanced: 43%</span>
<span class="t " style="left:2353.4px;top:1182.1px;font-size:27px;color:#1f6ba6;font-weight:700;transform:scaleX(0.9372);transform-origin:0 50%;">Actions</span>
<svg class="b" style="left:2460.8px;top:1190.3px;" width="17.2" height="10.2" viewBox="0 0 18 10"><path d="M1.6 0.6h14.8c1 0 1.4 1.1 0.7 1.8l-7.2 7c-0.5 0.5-1.3 0.5-1.8 0l-7.2-7C0.2 1.7 0.6 0.6 1.6 0.6z" fill="#1f6ba6"/></svg>
<div class="b" style="left:43.0px;top:1297.4px;width:43.0px;height:43.0px;border:1px solid #d0d4dd;border-radius:9px;background:#f9fafb;"></div>
<span class="t " style="left:130.5px;top:1307.1px;font-size:25.8px;color:#1b2333;transform:scaleX(0.9840);transform-origin:0 50%;">Identifying Concrete Nouns</span>
<span class="t " style="left:934.9px;top:1307.1px;font-size:25.8px;color:#1b2333;transform:scaleX(1.0146);transform-origin:0 50%;">00:08:08</span>
<div class="b" style="left:1080.2px;top:1286.4px;width:345.1px;height:14.4px;background:#0a7a58;border-radius:4px 0 0 4px;"></div>
<div class="b" style="left:1428.5px;top:1286.4px;width:16.5px;height:14.4px;background:#d0312a;border-radius:0 4px 4px 0;"></div>
<div class="b" style="left:1080.0px;top:1308.8px;width:130.0px;height:43.2px;background:#e9fcf4;border-radius:8px;"></div>
<span class="t " style="left:1094.3px;top:1317.2px;font-size:26.8px;color:#0f7b58;-webkit-text-stroke:0.7px #0f7b58;transform:scaleX(0.9785);transform-origin:0 50%;">258.6</span>
<svg class="b" style="left:1172.5px;top:1321.4px;" width="24.0" height="18.0" viewBox="0 0 24 18"><path d="M2 9.800l6.200 6.200L22 2.200" fill="none" stroke="#0f7b58" stroke-width="2.300" stroke-linecap="round" stroke-linejoin="round"/></svg>
<div class="b" style="left:1217.0px;top:1308.8px;width:111.0px;height:43.2px;background:#fdf0ef;border-radius:8px;"></div>
<span class="t " style="left:1229.9px;top:1317.2px;font-size:26.8px;color:#cc3026;-webkit-text-stroke:0.7px #cc3026;transform:scaleX(0.9862);transform-origin:0 50%;">12.4</span>
<svg class="b" style="left:1295.6px;top:1321.7px;" width="17.7" height="17.7" viewBox="0 0 17.7 17.7"><path d="M2 2l13.700 13.700M15.700 2L2 15.700" stroke="#cc3026" stroke-width="2.400" stroke-linecap="round"/></svg>
<div class="b" style="left:1335.2px;top:1308.8px;width:109.8px;height:43.2px;background:#e9f4fc;border-radius:8px;"></div>
<span class="t " style="left:1349.1px;top:1317.2px;font-size:26.8px;color:#1a5c91;-webkit-text-stroke:0.7px #1a5c91;transform:scaleX(1.0125);transform-origin:0 50%;">271</span>
<svg class="b" style="left:1407.1px;top:1317.6px;" width="24.0" height="26.0" viewBox="0 0 24 26"><path d="M1.900 1.300v23.400" stroke="#1a5c91" stroke-width="2.300" stroke-linecap="round"/><path d="M3 3.200c3.200-1.200 5.600-.900 8.800.200s5.800 1.100 9.300-.200v15.400c-3.500 1.300-6.100 1.300-9.300.200s-5.600-1.400-8.800-.200z" fill="none" stroke="#1a5c91" stroke-width="2.200" stroke-linejoin="round"/><path d="M3 8.400c3.200-1.200 5.600-.900 8.800.200s5.800 1.100 9.300-.200M3 13.500c3.200-1.200 5.600-.900 8.800.200s5.800 1.100 9.300-.200M9.300 2.400v15.600M15.300 3.900v15.600" fill="none" stroke="#1a5c91" stroke-width="2.300"/></svg>
<div class="b" style="left:1571.2px;top:1294.5px;width:77.5px;height:49.6px;background:#9fa2b0;border-radius:25px;"></div>
<span class="t " style="left:1584.9px;top:1307.1px;font-size:25.8px;color:#ffffff;transform:scaleX(0.9556);transform-origin:0 50%;">95%</span>
<span class="t " style="left:1943.9px;top:1307.1px;font-size:25.8px;color:#1b2333;transform:scaleX(1.0739);transform-origin:0 50%;">271</span>
<div class="b" style="left:2047.9px;top:1286.4px;width:80.0px;height:14.2px;background:#9fa2b0;border-radius:4px 0 0 4px;"></div>
<div class="b" style="left:2131.9px;top:1286.4px;width:16.0px;height:14.2px;background:#5fa915;"></div>
<div class="b" style="left:2151.9px;top:1286.4px;width:36.0px;height:14.2px;background:#6c70e4;"></div>
<div class="b" style="left:2191.9px;top:1286.4px;width:70.2px;height:14.2px;background:#a637b5;border-radius:0 4px 4px 0;"></div>
<svg class="b" style="left:2049.4px;top:1319.0px;" width="26.0" height="30.0" viewBox="-13 -15 26 30"><path d="M0-13.500L11.650-6.300V6.300L0 13.500L-11.650 6.300V-6.300z" fill="#560562"/><path d="M0-7.400L6.450-3.600V3.600L0 7.400L-6.450 3.600V-3.600z" fill="#dc63f1"/></svg>
<span class="t " style="left:2091.8px;top:1321.0px;font-size:25.8px;color:#1b2333;transform:scaleX(0.9401);transform-origin:0 50%;">Advanced: 33%</span>
<span class="t " style="left:2353.4px;top:1307.2px;font-size:27px;color:#1f6ba6;font-weight:700;transform:scaleX(0.9372);transform-origin:0 50%;">Actions</span>
<svg class="b" style="left:2460.8px;top:1315.5px;" width="17.2" height="10.2" viewBox="0 0 18 10"><path d="M1.6 0.6h14.8c1 0 1.4 1.1 0.7 1.8l-7.2 7c-0.5 0.5-1.3 0.5-1.8 0l-7.2-7C0.2 1.7 0.6 0.6 1.6 0.6z" fill="#1f6ba6"/></svg>
<div class="b" style="left:43.0px;top:1422.5px;width:43.0px;height:43.0px;border:1px solid #d0d4dd;border-radius:9px;background:#f9fafb;"></div>
<span class="t " style="left:130.4px;top:1432.2px;font-size:25.8px;color:#1b2333;transform:scaleX(0.9951);transform-origin:0 50%;">Identifying Abstract Nouns</span>
<span class="t " style="left:934.9px;top:1432.2px;font-size:25.8px;color:#1b2333;transform:scaleX(1.0159);transform-origin:0 50%;">00:07:41</span>
<div class="b" style="left:1080.2px;top:1411.5px;width:345.2px;height:14.4px;background:#0a7a58;border-radius:4px 0 0 4px;"></div>
<div class="b" style="left:1428.6px;top:1411.5px;width:16.4px;height:14.4px;background:#d0312a;border-radius:0 4px 4px 0;"></div>
<div class="b" style="left:1080.0px;top:1433.9px;width:130.0px;height:43.2px;background:#e9fcf4;border-radius:8px;"></div>
<span class="t " style="left:1094.3px;top:1442.3px;font-size:26.8px;color:#0f7b58;-webkit-text-stroke:0.7px #0f7b58;transform:scaleX(0.9725);transform-origin:0 50%;">223.4</span>
<svg class="b" style="left:1172.5px;top:1446.5px;" width="24.0" height="18.0" viewBox="0 0 24 18"><path d="M2 9.800l6.200 6.200L22 2.200" fill="none" stroke="#0f7b58" stroke-width="2.300" stroke-linecap="round" stroke-linejoin="round"/></svg>
<div class="b" style="left:1217.0px;top:1433.9px;width:111.0px;height:43.2px;background:#fdf0ef;border-radius:8px;"></div>
<span class="t " style="left:1229.9px;top:1442.3px;font-size:26.8px;color:#cc3026;-webkit-text-stroke:0.7px #cc3026;transform:scaleX(0.9943);transform-origin:0 50%;">10.6</span>
<svg class="b" style="left:1295.6px;top:1446.8px;" width="17.7" height="17.7" viewBox="0 0 17.7 17.7"><path d="M2 2l13.700 13.700M15.700 2L2 15.700" stroke="#cc3026" stroke-width="2.400" stroke-linecap="round"/></svg>
<div class="b" style="left:1335.2px;top:1433.9px;width:109.8px;height:43.2px;background:#e9f4fc;border-radius:8px;"></div>
<span class="t " style="left:1349.2px;top:1442.3px;font-size:26.8px;color:#1a5c91;-webkit-text-stroke:0.7px #1a5c91;">234</span>
<svg class="b" style="left:1407.1px;top:1442.7px;" width="24.0" height="26.0" viewBox="0 0 24 26"><path d="M1.900 1.300v23.400" stroke="#1a5c91" stroke-width="2.300" stroke-linecap="round"/><path d="M3 3.200c3.200-1.200 5.600-.900 8.800.200s5.800 1.100 9.300-.200v15.400c-3.500 1.300-6.100 1.300-9.300.200s-5.600-1.400-8.800-.200z" fill="none" stroke="#1a5c91" stroke-width="2.200" stroke-linejoin="round"/><path d="M3 8.400c3.200-1.200 5.600-.900 8.800.200s5.800 1.100 9.300-.200M3 13.500c3.200-1.200 5.600-.900 8.800.200s5.800 1.100 9.300-.200M9.300 2.400v15.600M15.300 3.900v15.600" fill="none" stroke="#1a5c91" stroke-width="2.300"/></svg>
<div class="b" style="left:1571.2px;top:1419.6px;width:77.5px;height:49.6px;background:#9fa2b0;border-radius:25px;"></div>
<span class="t " style="left:1584.9px;top:1432.2px;font-size:25.8px;color:#ffffff;transform:scaleX(0.9556);transform-origin:0 50%;">95%</span>
<span class="t " style="left:1943.9px;top:1432.2px;font-size:25.8px;color:#1b2333;transform:scaleX(1.0604);transform-origin:0 50%;">234</span>
<div class="b" style="left:2047.9px;top:1411.5px;width:80.0px;height:14.2px;background:#9fa2b0;border-radius:4px 0 0 4px;"></div>
<div class="b" style="left:2131.9px;top:1411.5px;width:16.0px;height:14.2px;background:#5fa915;"></div>
<div class="b" style="left:2151.9px;top:1411.5px;width:44.0px;height:14.2px;background:#6c70e4;"></div>
<div class="b" style="left:2199.9px;top:1411.5px;width:62.2px;height:14.2px;background:#a637b5;border-radius:0 4px 4px 0;"></div>
<svg class="b" style="left:2049.4px;top:1444.1px;" width="26.0" height="30.0" viewBox="-13 -15 26 30"><path d="M0-13.500L11.650-6.300V6.300L0 13.500L-11.650 6.300V-6.300z" fill="#560562"/><path d="M0-7.400L6.450-3.600V3.600L0 7.400L-6.450 3.600V-3.600z" fill="#dc63f1"/></svg>
<span class="t " style="left:2091.8px;top:1446.1px;font-size:25.8px;color:#1b2333;transform:scaleX(0.9401);transform-origin:0 50%;">Advanced: 29%</span>
<span class="t " style="left:2353.4px;top:1432.3px;font-size:27px;color:#1f6ba6;font-weight:700;transform:scaleX(0.9372);transform-origin:0 50%;">Actions</span>
<svg class="b" style="left:2460.8px;top:1440.6px;" width="17.2" height="10.2" viewBox="0 0 18 10"><path d="M1.6 0.6h14.8c1 0 1.4 1.1 0.7 1.8l-7.2 7c-0.5 0.5-1.3 0.5-1.8 0l-7.2-7C0.2 1.7 0.6 0.6 1.6 0.6z" fill="#1f6ba6"/></svg>
<div class="b" style="left:43.0px;top:1547.6px;width:43.0px;height:43.0px;border:1px solid #d0d4dd;border-radius:9px;background:#f9fafb;"></div>
<span class="t " style="left:130.4px;top:1557.4px;font-size:25.8px;color:#1b2333;transform:scaleX(0.9870);transform-origin:0 50%;">Identifying Collective Nouns</span>
<span class="t " style="left:934.9px;top:1557.4px;font-size:25.8px;color:#1b2333;transform:scaleX(1.0159);transform-origin:0 50%;">00:03:42</span>
<div class="b" style="left:1080.2px;top:1536.6px;width:349.4px;height:14.4px;background:#0a7a58;border-radius:4px 0 0 4px;"></div>
<div class="b" style="left:1432.8px;top:1536.6px;width:12.2px;height:14.4px;background:#d0312a;border-radius:0 4px 4px 0;"></div>
<div class="b" style="left:1080.0px;top:1559.0px;width:130.0px;height:43.2px;background:#e9fcf4;border-radius:8px;"></div>
<span class="t " style="left:1093.7px;top:1567.4px;font-size:26.8px;color:#0f7b58;-webkit-text-stroke:0.7px #0f7b58;transform:scaleX(0.9888);transform-origin:0 50%;">192.3</span>
<svg class="b" style="left:1172.5px;top:1571.6px;" width="24.0" height="18.0" viewBox="0 0 24 18"><path d="M2 9.800l6.200 6.200L22 2.200" fill="none" stroke="#0f7b58" stroke-width="2.300" stroke-linecap="round" stroke-linejoin="round"/></svg>
<div class="b" style="left:1217.0px;top:1559.0px;width:111.0px;height:43.2px;background:#fdf0ef;border-radius:8px;"></div>
<span class="t " style="left:1238.5px;top:1567.4px;font-size:26.8px;color:#cc3026;-webkit-text-stroke:0.7px #cc3026;transform:scaleX(0.9527);transform-origin:0 50%;">6.7</span>
<svg class="b" style="left:1287.8px;top:1571.9px;" width="17.7" height="17.7" viewBox="0 0 17.7 17.7"><path d="M2 2l13.700 13.700M15.700 2L2 15.700" stroke="#cc3026" stroke-width="2.400" stroke-linecap="round"/></svg>
<div class="b" style="left:1335.2px;top:1559.0px;width:109.8px;height:43.2px;background:#e9f4fc;border-radius:8px;"></div>
<span class="t " style="left:1348.4px;top:1567.4px;font-size:26.8px;color:#1a5c91;-webkit-text-stroke:0.7px #1a5c91;transform:scaleX(1.0272);transform-origin:0 50%;">199</span>
<svg class="b" style="left:1407.1px;top:1567.8px;" width="24.0" height="26.0" viewBox="0 0 24 26"><path d="M1.900 1.300v23.400" stroke="#1a5c91" stroke-width="2.300" stroke-linecap="round"/><path d="M3 3.200c3.200-1.200 5.600-.900 8.800.200s5.800 1.100 9.300-.200v15.400c-3.500 1.300-6.100 1.300-9.300.200s-5.600-1.400-8.800-.200z" fill="none" stroke="#1a5c91" stroke-width="2.200" stroke-linejoin="round"/><path d="M3 8.400c3.200-1.200 5.600-.900 8.800.200s5.800 1.100 9.300-.200M3 13.500c3.200-1.200 5.600-.900 8.800.200s5.800 1.100 9.300-.200M9.300 2.400v15.600M15.300 3.900v15.600" fill="none" stroke="#1a5c91" stroke-width="2.300"/></svg>
<div class="b" style="left:1571.2px;top:1544.7px;width:77.5px;height:49.6px;background:#9fa2b0;border-radius:25px;"></div>
<span class="t " style="left:1584.9px;top:1557.4px;font-size:25.8px;color:#ffffff;transform:scaleX(0.9556);transform-origin:0 50%;">97%</span>
<span class="t " style="left:1943.2px;top:1557.4px;font-size:25.8px;color:#1b2333;transform:scaleX(1.0895);transform-origin:0 50%;">199</span>
<div class="b" style="left:2047.9px;top:1536.6px;width:86.0px;height:14.2px;background:#9fa2b0;border-radius:4px 0 0 4px;"></div>
<div class="b" style="left:2137.9px;top:1536.6px;width:16.0px;height:14.2px;background:#5fa915;"></div>
<div class="b" style="left:2157.9px;top:1536.6px;width:50.0px;height:14.2px;background:#6c70e4;"></div>
<div class="b" style="left:2211.9px;top:1536.6px;width:50.2px;height:14.2px;background:#a637b5;border-radius:0 4px 4px 0;"></div>
<svg class="b" style="left:2049.4px;top:1569.2px;" width="26.0" height="30.0" viewBox="-13 -15 26 30"><path d="M0-13.500L11.650-6.300V6.300L0 13.500L-11.650 6.300V-6.300z" fill="#560562"/><path d="M0-7.400L6.450-3.600V3.600L0 7.400L-6.450 3.600V-3.600z" fill="#dc63f1"/></svg>
<span class="t " style="left:2091.8px;top:1571.3px;font-size:25.8px;color:#1b2333;transform:scaleX(0.9401);transform-origin:0 50%;">Advanced: 24%</span>
<span class="t " style="left:2353.4px;top:1557.4px;font-size:27px;color:#1f6ba6;font-weight:700;transform:scaleX(0.9372);transform-origin:0 50%;">Actions</span>
<svg class="b" style="left:2460.8px;top:1565.7px;" width="17.2" height="10.2" viewBox="0 0 18 10"><path d="M1.6 0.6h14.8c1 0 1.4 1.1 0.7 1.8l-7.2 7c-0.5 0.5-1.3 0.5-1.8 0l-7.2-7C0.2 1.7 0.6 0.6 1.6 0.6z" fill="#1f6ba6"/></svg>
<div class="b" style="left:43.0px;top:1672.7px;width:43.0px;height:43.0px;border:1px solid #d0d4dd;border-radius:9px;background:#f9fafb;"></div>
<span class="t " style="left:130.4px;top:1682.5px;font-size:25.8px;color:#1b2333;transform:scaleX(0.9955);transform-origin:0 50%;">Identifying Irregular Nouns</span>
<span class="t " style="left:934.9px;top:1682.5px;font-size:25.8px;color:#1b2333;transform:scaleX(1.0133);transform-origin:0 50%;">00:05:00</span>
<div class="b" style="left:1080.2px;top:1661.7px;width:318.2px;height:14.4px;background:#0a7a58;border-radius:4px 0 0 4px;"></div>
<div class="b" style="left:1401.6px;top:1661.7px;width:43.4px;height:14.4px;background:#d0312a;border-radius:0 4px 4px 0;"></div>
<div class="b" style="left:1080.0px;top:1684.1px;width:130.0px;height:43.2px;background:#e9fcf4;border-radius:8px;"></div>
<span class="t " style="left:1094.3px;top:1692.5px;font-size:26.8px;color:#0f7b58;-webkit-text-stroke:0.7px #0f7b58;transform:scaleX(0.9805);transform-origin:0 50%;">255.2</span>
<svg class="b" style="left:1172.5px;top:1696.7px;" width="24.0" height="18.0" viewBox="0 0 24 18"><path d="M2 9.800l6.200 6.200L22 2.200" fill="none" stroke="#0f7b58" stroke-width="2.300" stroke-linecap="round" stroke-linejoin="round"/></svg>
<div class="b" style="left:1217.0px;top:1684.1px;width:111.0px;height:43.2px;background:#fdf0ef;border-radius:8px;"></div>
<span class="t " style="left:1230.9px;top:1692.5px;font-size:26.8px;color:#cc3026;-webkit-text-stroke:0.7px #cc3026;transform:scaleX(0.9744);transform-origin:0 50%;">34.8</span>
<svg class="b" style="left:1295.6px;top:1697.0px;" width="17.7" height="17.7" viewBox="0 0 17.7 17.7"><path d="M2 2l13.700 13.700M15.700 2L2 15.700" stroke="#cc3026" stroke-width="2.400" stroke-linecap="round"/></svg>
<div class="b" style="left:1335.2px;top:1684.1px;width:109.8px;height:43.2px;background:#e9f4fc;border-radius:8px;"></div>
<span class="t " style="left:1349.2px;top:1692.5px;font-size:26.8px;color:#1a5c91;-webkit-text-stroke:0.7px #1a5c91;transform:scaleX(1.0060);transform-origin:0 50%;">290</span>
<svg class="b" style="left:1407.1px;top:1692.9px;" width="24.0" height="26.0" viewBox="0 0 24 26"><path d="M1.900 1.300v23.400" stroke="#1a5c91" stroke-width="2.300" stroke-linecap="round"/><path d="M3 3.200c3.200-1.200 5.600-.900 8.800.200s5.800 1.100 9.300-.200v15.400c-3.500 1.300-6.100 1.300-9.300.200s-5.600-1.400-8.800-.200z" fill="none" stroke="#1a5c91" stroke-width="2.200" stroke-linejoin="round"/><path d="M3 8.400c3.200-1.200 5.600-.900 8.800.200s5.800 1.100 9.300-.200M3 13.500c3.200-1.200 5.600-.900 8.800.200s5.800 1.100 9.300-.200M9.300 2.400v15.600M15.300 3.900v15.600" fill="none" stroke="#1a5c91" stroke-width="2.300"/></svg>
<div class="b" style="left:1571.2px;top:1669.8px;width:77.5px;height:49.6px;background:#9fa2b0;border-radius:25px;"></div>
<span class="t " style="left:1585.0px;top:1682.5px;font-size:25.8px;color:#ffffff;transform:scaleX(0.9544);transform-origin:0 50%;">88%</span>
<span class="t " style="left:1943.9px;top:1682.5px;font-size:25.8px;color:#1b2333;transform:scaleX(1.0671);transform-origin:0 50%;">290</span>
<div class="b" style="left:2047.9px;top:1661.7px;width:86.0px;height:14.2px;background:#9fa2b0;border-radius:4px 0 0 4px;"></div>
<div class="b" style="left:2137.1px;top:1661.7px;width:9.9px;height:14.2px;background:#4a5161;"></div>
<div class="b" style="left:2151.1px;top:1661.7px;width:17.8px;height:14.2px;background:#5fa915;"></div>
<div class="b" style="left:2172.1px;top:1661.7px;width:37.9px;height:14.2px;background:#6c70e4;"></div>
<div class="b" style="left:2214.1px;top:1661.7px;width:48.0px;height:14.2px;background:#a637b5;border-radius:0 4px 4px 0;"></div>
<svg class="b" style="left:2049.4px;top:1694.3px;" width="26.0" height="30.0" viewBox="-13 -15 26 30"><path d="M0-13.500L11.650-6.300V6.300L0 13.500L-11.650 6.300V-6.300z" fill="#560562"/><path d="M0-7.400L6.450-3.600V3.600L0 7.400L-6.450 3.600V-3.600z" fill="#dc63f1"/></svg>
<span class="t " style="left:2091.8px;top:1696.4px;font-size:25.8px;color:#1b2333;transform:scaleX(0.9401);transform-origin:0 50%;">Advanced: 24%</span>
<span class="t " style="left:2353.4px;top:1682.6px;font-size:27px;color:#1f6ba6;font-weight:700;transform:scaleX(0.9372);transform-origin:0 50%;">Actions</span>
<svg class="b" style="left:2460.8px;top:1690.8px;" width="17.2" height="10.2" viewBox="0 0 18 10"><path d="M1.6 0.6h14.8c1 0 1.4 1.1 0.7 1.8l-7.2 7c-0.5 0.5-1.3 0.5-1.8 0l-7.2-7C0.2 1.7 0.6 0.6 1.6 0.6z" fill="#1f6ba6"/></svg>
<div class="b" style="left:43.0px;top:1797.8px;width:43.0px;height:43.0px;border:1px solid #d0d4dd;border-radius:9px;background:#f9fafb;"></div>
<span class="t " style="left:130.5px;top:1788.7px;font-size:25.8px;color:#1b2333;transform:scaleX(0.9762);transform-origin:0 50%;">Distinguishing Concrete Nouns from</span>
<span class="t " style="left:132.4px;top:1826.7px;font-size:25.8px;color:#1b2333;transform:scaleX(0.9718);transform-origin:0 50%;">Abstract Nouns</span>
<span class="t " style="left:934.9px;top:1807.6px;font-size:25.8px;color:#1b2333;transform:scaleX(1.0159);transform-origin:0 50%;">00:04:42</span>
<div class="b" style="left:1080.2px;top:1786.8px;width:342.9px;height:14.4px;background:#0a7a58;border-radius:4px 0 0 4px;"></div>
<div class="b" style="left:1426.3px;top:1786.8px;width:18.7px;height:14.4px;background:#d0312a;border-radius:0 4px 4px 0;"></div>
<div class="b" style="left:1080.0px;top:1809.2px;width:130.0px;height:43.2px;background:#e9fcf4;border-radius:8px;"></div>
<span class="t " style="left:1094.3px;top:1817.7px;font-size:26.8px;color:#0f7b58;-webkit-text-stroke:0.7px #0f7b58;transform:scaleX(0.9795);transform-origin:0 50%;">295.9</span>
<svg class="b" style="left:1172.5px;top:1821.8px;" width="24.0" height="18.0" viewBox="0 0 24 18"><path d="M2 9.800l6.200 6.200L22 2.200" fill="none" stroke="#0f7b58" stroke-width="2.300" stroke-linecap="round" stroke-linejoin="round"/></svg>
<div class="b" style="left:1217.0px;top:1809.2px;width:111.0px;height:43.2px;background:#fdf0ef;border-radius:8px;"></div>
<span class="t " style="left:1229.9px;top:1817.7px;font-size:26.8px;color:#cc3026;-webkit-text-stroke:0.7px #cc3026;">16.1</span>
<svg class="b" style="left:1295.6px;top:1822.1px;" width="17.7" height="17.7" viewBox="0 0 17.7 17.7"><path d="M2 2l13.700 13.700M15.700 2L2 15.700" stroke="#cc3026" stroke-width="2.400" stroke-linecap="round"/></svg>
<div class="b" style="left:1335.2px;top:1809.2px;width:109.8px;height:43.2px;background:#e9f4fc;border-radius:8px;"></div>
<span class="t " style="left:1349.5px;top:1817.7px;font-size:26.8px;color:#1a5c91;-webkit-text-stroke:0.7px #1a5c91;transform:scaleX(1.0045);transform-origin:0 50%;">312</span>
<svg class="b" style="left:1407.1px;top:1818.0px;" width="24.0" height="26.0" viewBox="0 0 24 26"><path d="M1.900 1.300v23.400" stroke="#1a5c91" stroke-width="2.300" stroke-linecap="round"/><path d="M3 3.200c3.200-1.200 5.600-.900 8.800.200s5.800 1.100 9.300-.200v15.400c-3.500 1.300-6.100 1.300-9.300.200s-5.600-1.400-8.800-.200z" fill="none" stroke="#1a5c91" stroke-width="2.200" stroke-linejoin="round"/><path d="M3 8.400c3.200-1.200 5.600-.900 8.800.200s5.800 1.100 9.300-.200M3 13.500c3.200-1.200 5.600-.900 8.800.200s5.800 1.100 9.300-.200M9.300 2.400v15.600M15.300 3.900v15.600" fill="none" stroke="#1a5c91" stroke-width="2.300"/></svg>
<div class="b" style="left:1571.2px;top:1794.9px;width:77.5px;height:49.6px;background:#9fa2b0;border-radius:25px;"></div>
<span class="t " style="left:1584.9px;top:1807.6px;font-size:25.8px;color:#ffffff;transform:scaleX(0.9556);transform-origin:0 50%;">95%</span>
<span class="t " style="left:1944.3px;top:1807.6px;font-size:25.8px;color:#1b2333;transform:scaleX(1.0654);transform-origin:0 50%;">312</span>
<div class="b" style="left:2047.9px;top:1786.8px;width:97.1px;height:14.2px;background:#9fa2b0;border-radius:4px 0 0 4px;"></div>
<div class="b" style="left:2149.1px;top:1786.8px;width:17.8px;height:14.2px;background:#5fa915;"></div>
<div class="b" style="left:2171.0px;top:1786.8px;width:37.9px;height:14.2px;background:#6c70e4;"></div>
<div class="b" style="left:2213.0px;top:1786.8px;width:49.1px;height:14.2px;background:#a637b5;border-radius:0 4px 4px 0;"></div>
<svg class="b" style="left:2049.4px;top:1819.4px;" width="26.0" height="30.0" viewBox="-13 -15 26 30"><path d="M0-13.500L11.650-6.300V6.300L0 13.500L-11.650 6.300V-6.300z" fill="#560562"/><path d="M0-7.400L6.450-3.600V3.600L0 7.400L-6.450 3.600V-3.600z" fill="#dc63f1"/></svg>
<span class="t " style="left:2091.8px;top:1821.5px;font-size:25.8px;color:#1b2333;transform:scaleX(0.9401);transform-origin:0 50%;">Advanced: 24%</span>
<span class="t " style="left:2353.4px;top:1807.7px;font-size:27px;color:#1f6ba6;font-weight:700;transform:scaleX(0.9372);transform-origin:0 50%;">Actions</span>
<svg class="b" style="left:2460.8px;top:1815.9px;" width="17.2" height="10.2" viewBox="0 0 18 10"><path d="M1.6 0.6h14.8c1 0 1.4 1.1 0.7 1.8l-7.2 7c-0.5 0.5-1.3 0.5-1.8 0l-7.2-7C0.2 1.7 0.6 0.6 1.6 0.6z" fill="#1f6ba6"/></svg>
<div class="b" style="left:618.8px;top:1164.8px;width:58.2px;height:58.2px;background:#1f7cba;border-radius:50%;"></div>
<svg class="b" style="left:636.0px;top:1182.0px;" width="24.0" height="24.0" viewBox="0 0 24 24"><path d="M5.200 4.800L18.900 18.500M7.100 18.500H18.900V6.800" fill="none" stroke="#ffffff" stroke-width="3" stroke-linecap="round" stroke-linejoin="round"/></svg>
<div class="b" style="left:1935.2px;top:1256.6px;width:433.0px;height:305.6px;background:#fff;border:1.5px solid #e3e6eb;border-radius:12px;box-shadow:0 6px 22px rgba(30,40,60,.10),0 1px 4px rgba(30,40,60,.06);"></div>
<div class="b" style="left:1965.4px;top:1290.7px;width:28.8px;height:28.8px;background:#9fa2b0;border-radius:50%;"></div>
<span class="t " style="left:2007.7px;top:1292.5px;font-size:25.4px;color:#1b2333;transform:scaleX(1.0291);transform-origin:0 50%;">Not started:</span>
<span class="t " style="left:2144.2px;top:1292.5px;font-size:25.4px;color:#727b8a;transform:scaleX(0.9736);transform-origin:0 50%;">(9 students)</span>
<span class="t " style="left:2290.0px;top:1292.5px;font-size:25.4px;color:#1b2333;transform:scaleX(0.9473);transform-origin:0 50%;">43%</span>
<div class="b" style="left:1965.4px;top:1343.0px;width:28.8px;height:28.8px;background:#4a5161;border-radius:50%;"></div>
<span class="t " style="left:2007.8px;top:1344.8px;font-size:25.4px;color:#1b2333;transform:scaleX(0.9955);transform-origin:0 50%;">Unranked:</span>
<span class="t " style="left:2158.8px;top:1344.8px;font-size:25.4px;color:#727b8a;transform:scaleX(0.9713);transform-origin:0 50%;">(0 students)</span>
<span class="t " style="left:2303.1px;top:1344.8px;font-size:25.4px;color:#1b2333;transform:scaleX(0.9552);transform-origin:0 50%;">0%</span>
<svg class="b" style="left:1967.0px;top:1397.1px;" width="26.0" height="25.0" viewBox="0 0 26 25"><path d="M13 3.400L22.600 20.800H3.400z" fill="#1b5a0b" stroke="#1b5a0b" stroke-width="4.600" stroke-linejoin="round"/><path d="M13 7.600L19.400 19.400H6.600z" fill="#60ac15" stroke="#60ac15" stroke-width="0.800" stroke-linejoin="round"/></svg>
<span class="t " style="left:2007.8px;top:1397.2px;font-size:25.4px;color:#1b2333;">Beginner:</span>
<span class="t " style="left:2169.6px;top:1397.2px;font-size:25.4px;color:#727b8a;transform:scaleX(0.9843);transform-origin:0 50%;">(1 student)</span>
<span class="t " style="left:2303.0px;top:1397.2px;font-size:25.4px;color:#1b2333;transform:scaleX(0.9570);transform-origin:0 50%;">5%</span>
<svg class="b" style="left:1965.9px;top:1447.2px;" width="28.0" height="28.0" viewBox="-14 -14 28 28"><path d="M0-11.500L3.600-3.600L11.500 0L3.600 3.600L0 11.500L-3.600 3.600L-11.500 0L-3.600-3.600z" fill="#123d8c" stroke="#123d8c" stroke-width="3.200" stroke-linejoin="round"/><path d="M0-6.500L2.700-2.700L6.500 0L2.700 2.700L0 6.500L-2.700 2.700L-6.500 0L-2.700-2.700z" fill="#6796ce"/></svg>
<span class="t " style="left:2007.4px;top:1449.5px;font-size:25.4px;color:#1b2333;transform:scaleX(1.0373);transform-origin:0 50%;">Intermediate:</span>
<span class="t " style="left:2158.6px;top:1449.5px;font-size:25.4px;color:#727b8a;transform:scaleX(0.9728);transform-origin:0 50%;">(2 students)</span>
<span class="t " style="left:2302.9px;top:1449.5px;font-size:25.4px;color:#1b2333;transform:scaleX(0.9605);transform-origin:0 50%;">9%</span>
<svg class="b" style="left:1966.9px;top:1499.2px;" width="26.0" height="30.0" viewBox="-13 -15 26 30"><path d="M0-13.500L11.650-6.300V6.300L0 13.500L-11.650 6.300V-6.300z" fill="#560562"/><path d="M0-7.400L6.450-3.600V3.600L0 7.400L-6.450 3.600V-3.600z" fill="#dc63f1"/></svg>
<span class="t " style="left:2009.7px;top:1501.9px;font-size:25.4px;color:#1b2333;transform:scaleX(0.9688);transform-origin:0 50%;">Advanced:</span>
<span class="t " style="left:2144.2px;top:1501.9px;font-size:25.4px;color:#727b8a;transform:scaleX(0.9736);transform-origin:0 50%;">(9 students)</span>
<span class="t " style="left:2290.0px;top:1501.9px;font-size:25.4px;color:#1b2333;transform:scaleX(0.9473);transform-origin:0 50%;">43%</span>
<div class="b" style="left:2380.0px;top:1780.0px;width:178.0px;height:80.0px;background:radial-gradient(ellipse 150px 90px at 150px 100px, rgba(40,50,70,.07), rgba(40,50,70,0) 100%);"></div>
</div></body></html>
